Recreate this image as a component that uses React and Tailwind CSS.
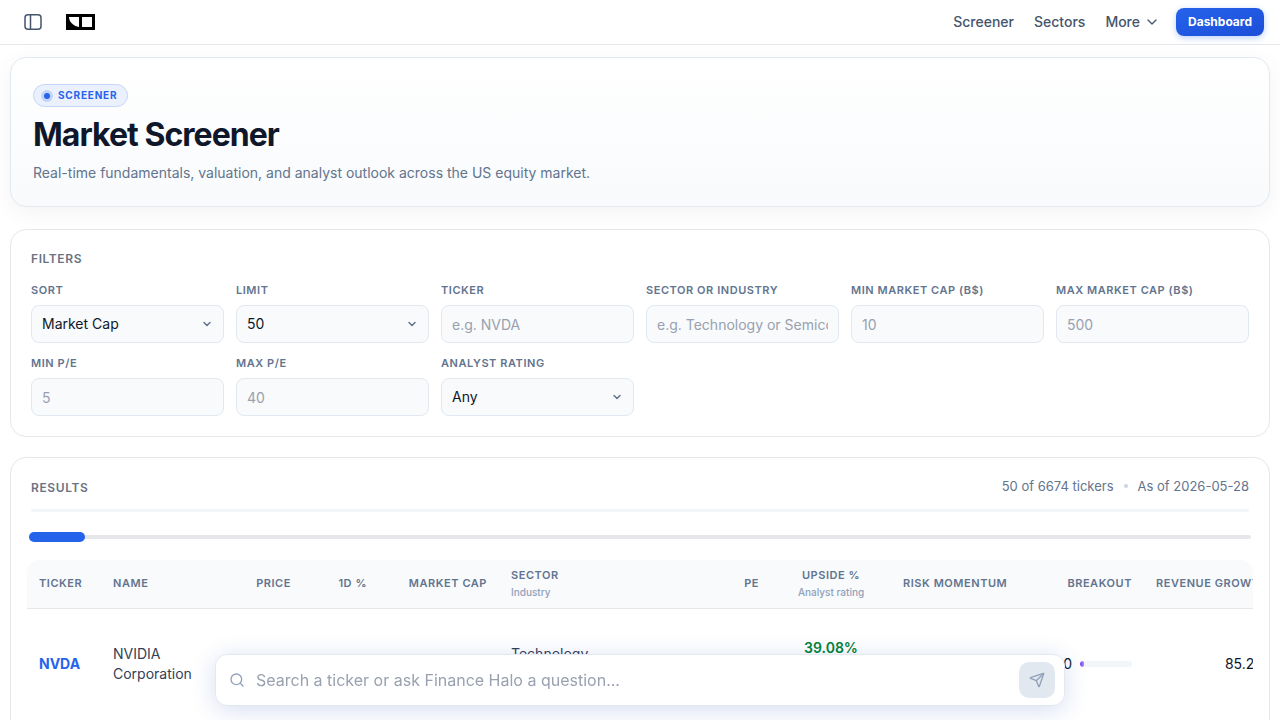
import { useState } from 'react'
import { ChevronDown, Search, Send } from 'lucide-react'

const FILTERS = [
    { id: 'sort', label: 'Sort', options: ['Market Cap', 'Price', 'Upside %'] },
    { id: 'limit', label: 'Limit', options: ['50', '100', '200'] },
    { id: 'ticker', label: 'Ticker', placeholder: 'e.g. NVDA' },
    { id: 'sector', label: 'Sector or industry', placeholder: 'e.g. Technology or Semiconductors' },
    { id: 'minCap', label: 'Min market cap (B$)', placeholder: '10' },
    { id: 'maxCap', label: 'Max market cap (B$)', placeholder: '500' },
    { id: 'minPe', label: 'Min P/E', placeholder: '5' },
    { id: 'maxPe', label: 'Max P/E', placeholder: '40' },
    { id: 'rating', label: 'Analyst rating', options: ['Any', 'Buy', 'Hold', 'Sell'] },
]

const COLUMNS = [
    { label: 'Ticker', col: 'w-[74px]', align: 'text-left' },
    { label: 'Name', col: 'w-[126px]', align: 'text-left' },
    { label: 'Price', col: 'w-[76px]', align: 'text-right' },
    { label: '1D %', col: 'w-[76px]', align: 'text-right' },
    { label: 'Market cap', col: 'w-[120px]', align: 'text-right' },
    { label: 'Sector', sub: 'Industry', col: 'w-[200px]', align: 'text-left' },
    { label: 'PE', col: 'w-[72px]', align: 'text-right' },
    { label: 'Upside %', sub: 'Analyst rating', col: 'w-[120px]', align: 'text-center' },
    { label: 'Risk momentum', col: 'w-[128px]', align: 'text-left' },
    { label: 'Breakout', col: 'w-[125px]', align: 'text-right' },
    { label: 'Revenue growth', col: 'w-[136px]', align: 'text-right' },
]

const ROWS = [
    { ticker: 'NVDA', name: 'NVIDIA Corporation', sector: 'Technology', upside: '39.08%', breakout: 0, growth: '85.2%' },
]

function SidebarIcon() {
    return (
        <svg width="18" height="16" viewBox="0 0 18 16" fill="none" stroke="currentColor" strokeWidth="1.5">
            <rect x="1" y="0.75" width="16" height="14.5" rx="3" />
            <path d="M6.5 1v14" />
        </svg>
    )
}

function Logo() {
    return (
        <svg width="29" height="16" viewBox="0 0 29 16">
            <rect width="29" height="16" fill="#000" />
            <path d="M3 3h10v10C8 12 4 9 3 4z" fill="#fff" />
            <rect x="16" y="3" width="10" height="10" fill="#fff" />
        </svg>
    )
}

function TopBar() {
    return (
        <header className="flex shrink-0 items-center justify-between border-b border-gray-200 bg-white py-2 pr-4 pl-6">
            <div className="flex items-center gap-6">
                <button aria-label="Toggle sidebar" className="text-slate-600"><SidebarIcon /></button>
                <a href="#home" aria-label="Home"><Logo /></a>
            </div>
            <nav className="flex items-center gap-5 text-sm font-medium text-slate-600">
                <a href="#screener">Screener</a>
                <a href="#sectors">Sectors</a>
                <div className="flex items-center gap-4">
                    <button className="flex items-center gap-1">More <ChevronDown size={16} /></button>
                    <a
                        href="#dashboard"
                        className="flex h-7 items-center rounded-lg bg-linear-to-br from-[#2563eb] to-[#1d4ed8] px-3 text-xs font-bold text-white shadow-[0_2px_6px_rgba(37,99,235,0.3)]"
                    >
                        Dashboard
                    </a>
                </div>
            </nav>
        </header>
    )
}

function Hero() {
    return (
        <section className="flex flex-col items-start gap-[10px] rounded-2xl border border-slate-200 bg-linear-to-b from-white to-slate-50 px-[22px] pt-[26px] pb-[23px] shadow-[0_6px_24px_rgba(15,23,42,0.05)]">
            <span className="flex h-[23px] items-center gap-2 rounded-full border border-[#c5d5fb] bg-[#ebf0fd] px-[10px] text-[10px] font-bold uppercase tracking-[0.08em] text-[#2563eb]">
                <span className="h-1.5 w-1.5 rounded-full bg-[#2563eb] ring-3 ring-[#2563eb]/20" />
                Screener
            </span>
            <h1 className="text-[32px] leading-9 font-bold tracking-[-0.03em] text-slate-900">Market Screener</h1>
            <p className="text-sm leading-5 text-slate-500">
                Real-time fundamentals, valuation, and analyst outlook across the US equity market.
            </p>
        </section>
    )
}

function FilterField({ id, label, options, placeholder }) {
    const box = 'h-[38px] w-full rounded-lg border border-slate-200 bg-slate-50 px-[10px] text-sm text-slate-900 outline-none focus:border-blue-500'
    return (
        <div className="flex min-w-0 flex-col gap-1.5">
            <label htmlFor={id} className="text-[11px] leading-[17px] font-semibold uppercase tracking-[0.05em] text-slate-500">{label}</label>
            {options ? (
                <div className="relative">
                    <select id={id} className={`${box} appearance-none`}>
                        {options.map(o => <option key={o}>{o}</option>)}
                    </select>
                    <ChevronDown size={12} strokeWidth={3} className="pointer-events-none absolute inset-y-0 right-[11px] my-auto text-slate-500" />
                </div>
            ) : (
                <input id={id} type="text" placeholder={placeholder} className={`${box} placeholder:text-gray-400`} />
            )}
        </div>
    )
}

function Filters() {
    return (
        <section className="mt-[22px] rounded-2xl border border-gray-200 bg-white p-5">
            <h2 className="mb-[14px] text-xs leading-[18px] font-semibold uppercase tracking-[0.05em] text-gray-500">Filters</h2>
            <div className="grid grid-cols-[repeat(auto-fill,minmax(180px,1fr))] gap-3">
                {FILTERS.map(f => <FilterField key={f.id} {...f} />)}
            </div>
        </section>
    )
}

function ResultsTable() {
    return (
        <div className="mt-[18px] overflow-hidden rounded-t-xl">
            <table className="w-[1253px] table-fixed border-collapse text-sm">
                <colgroup>
                    {COLUMNS.map(c => <col key={c.label} className={c.col} />)}
                </colgroup>
                <thead>
                    <tr className="h-12 border-b border-gray-200 bg-slate-50">
                        {COLUMNS.map(c => (
                            <th key={c.label} className={`px-3 text-[11px] leading-[17px] font-semibold uppercase tracking-[0.05em] whitespace-nowrap text-slate-500 ${c.align}`}>
                                {c.label}
                                {c.sub && <span className="block text-[10px] font-medium normal-case tracking-normal text-slate-400">{c.sub}</span>}
                            </th>
                        ))}
                    </tr>
                </thead>
                <tbody>
                    {ROWS.map(r => (
                        <tr key={r.ticker} className="h-[112px]">
                            <td className="px-3 font-bold text-[#2563eb]">{r.ticker}</td>
                            <td className="px-3 text-slate-700">{r.name}</td>
                            <td />
                            <td />
                            <td />
                            <td className="px-3 pb-5 text-slate-700">{r.sector}</td>
                            <td />
                            <td className="px-3 pb-8 text-center font-semibold text-green-700">{r.upside}</td>
                            <td />
                            <td className="px-3 text-slate-900">
                                <div className="flex items-center justify-end gap-2">
                                    {r.breakout}
                                    <span className="h-1.5 w-[52px] overflow-hidden rounded-full bg-slate-100">
                                        <span className="block h-full w-1 rounded-full bg-linear-to-r from-[#7c3aed] to-[#a78bfa]" />
                                    </span>
                                </div>
                            </td>
                            <td className="px-3 text-right text-slate-900">{r.growth}</td>
                        </tr>
                    ))}
                </tbody>
            </table>
        </div>
    )
}

function Results() {
    const [scroll, setScroll] = useState(0)

    return (
        <section className="mt-5 rounded-2xl border border-gray-200 bg-white px-4 py-5">
            <div className="px-1">
                <div className="flex h-[19px] items-start justify-between">
                    <h2 className="text-xs leading-[19px] font-semibold uppercase tracking-[0.05em] text-gray-500">Results</h2>
                    <div className="flex items-center gap-[10px] text-[13px] leading-4 text-slate-500">
                        <span>50 of 6674 tickers</span>
                        <span className="h-1 w-1 rounded-full bg-slate-300" />
                        <span>As of 2026-05-28</span>
                    </div>
                </div>
                <div className="mt-3 h-[3px] rounded-full bg-slate-100" />
            </div>
            <div className="mt-5 px-0.5">
                <input
                    type="range"
                    aria-label="Scroll table"
                    value={scroll}
                    onChange={e => setScroll(Number(e.target.value))}
                    className="block h-[10px] w-full appearance-none bg-transparent [&::-webkit-slider-runnable-track]:h-1 [&::-webkit-slider-runnable-track]:rounded-full [&::-webkit-slider-runnable-track]:bg-gray-200 [&::-webkit-slider-thumb]:-mt-[3px] [&::-webkit-slider-thumb]:h-[10px] [&::-webkit-slider-thumb]:w-14 [&::-webkit-slider-thumb]:appearance-none [&::-webkit-slider-thumb]:rounded-full [&::-webkit-slider-thumb]:bg-[#2563eb]"
                />
            </div>
            <ResultsTable />
        </section>
    )
}

function AskBar() {
    return (
        <form
            onSubmit={e => e.preventDefault()}
            className="fixed inset-x-4 bottom-[14px] mx-auto flex h-[52px] max-w-[850px] items-center rounded-xl border border-slate-200 bg-white pr-[9px] pl-[13px] shadow-[0_4px_24px_rgba(30,64,175,0.18)]"
        >
            <Search size={16} className="shrink-0 text-slate-400" />
            <input
                type="text"
                aria-label="Search"
                placeholder="Search a ticker or ask Finance Halo a question..."
                className="min-w-0 flex-1 px-[11px] text-base text-slate-900 outline-none placeholder:text-gray-400"
            />
            <button aria-label="Send" className="flex h-9 w-9 shrink-0 items-center justify-center rounded-[10px] bg-slate-200 text-slate-400">
                <Send size={16} />
            </button>
        </form>
    )
}

export default function App() {
    return (
        <div className="flex h-screen flex-col bg-white font-['Inter',sans-serif]">
            <TopBar />
            <main className="min-h-0 flex-1 overflow-y-auto px-[10px] pt-3 pb-20 [scrollbar-width:none]">
                <Hero />
                <Filters />
                <Results />
            </main>
            <AskBar />
        </div>
    )
}
